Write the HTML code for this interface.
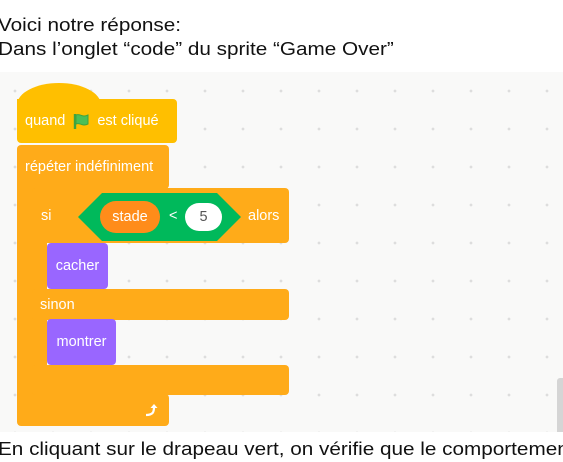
<!DOCTYPE html>
<html><head><meta charset="utf-8"><style>
*{margin:0;padding:0;box-sizing:border-box}
body{width:563px;height:462px;background:#fff;position:relative;overflow:hidden;font-family:"Liberation Sans",Arial,sans-serif}
.t{position:absolute;left:-2px;font-size:18px;color:#111;white-space:nowrap;transform:scaleX(1.15);transform-origin:0 0}
#cv{position:absolute;left:0;top:72px;width:563px;height:360px;background-color:#f9f9f8;
background-image:radial-gradient(circle,#ddd 1.2px,transparent 1.6px);background-size:38px 38px;background-position:-4px 0px}
.b{position:absolute;color:#fff;font-size:14.5px;display:flex;align-items:center;white-space:nowrap}
.o{background:#ffab19;border-radius:4px}
.p{background:#9966ff;border-radius:4px;justify-content:center}
</style></head><body>
<div class="t" style="top:15px">Voici notre réponse:</div>
<div class="t" style="top:39px">Dans l’onglet “code” du sprite “Game Over”</div>
<div id="cv"></div>
<div style="position:absolute;left:557px;top:378px;width:6px;height:54px;background:#d5d5d5;border-radius:3px 0 0 0"></div>
<!-- repeat -->
<div class="b o" style="left:17px;top:145px;width:152px;height:44px;padding-left:8px">répéter indéfiniment</div>
<div class="b o" style="left:17px;top:180px;width:18px;height:230px;border-radius:0"></div>
<div class="b o" style="left:17px;top:394px;width:152px;height:32px"></div>
<svg style="position:absolute;left:143px;top:402px" width="16" height="16" viewBox="0 0 16 16"><path d="M3 13 C10 13 11 10 11 5" stroke="#fff" stroke-width="2.2" fill="none"/><path d="M7.5 6 L11 2 L14.5 6Z" fill="#fff"/></svg>
<!-- hat -->
<div style="position:absolute;left:17px;top:83px;width:84px;height:40px;background:#ffbf00;border-radius:42px 42px 0 0/22px 22px 0 0"></div>
<div class="b" style="left:17px;top:99px;width:160px;height:44px;background:#ffbf00;border-radius:0 4px 4px 4px;padding-left:8px">quand
<svg style="margin:0 7px" width="18" height="18" viewBox="0 0 18 18"><path d="M3 2 V17" stroke="#3fa33f" stroke-width="2.4"/><path d="M4 3 C8 1 10 6 16 3 V12 C10 15 8 10 4 12Z" fill="#4cbf56" stroke="#3fa33f" stroke-width="1"/></svg>est cliqué</div>
<!-- if -->
<div class="b o" style="left:32px;top:188px;width:257px;height:55px;padding-left:9px">si</div>
<div class="b o" style="left:32px;top:230px;width:15px;height:165px;border-radius:0"></div>
<div class="b o" style="left:32px;top:289px;width:257px;height:31px;padding-left:8px">sinon</div>
<div class="b o" style="left:32px;top:365px;width:257px;height:30px"></div>
<svg style="position:absolute;left:78px;top:193px" width="163" height="48"><polygon points="0,24 24,0 139,0 163,24 139,48 24,48" fill="#00b95b"/></svg>
<div class="b" style="left:100px;top:201px;width:60px;height:32px;background:#ff8c1a;border-radius:16px;justify-content:center">stade</div>
<div class="b" style="left:169px;top:208px">&lt;</div>
<div class="b" style="left:185px;top:203px;width:37px;height:28px;background:#fff;border-radius:14px;justify-content:center;color:#555">5</div>
<div class="b" style="left:248px;top:208px">alors</div>
<div class="b p" style="left:47px;top:243px;width:61px;height:46px">cacher</div>
<div class="b p" style="left:47px;top:319px;width:69px;height:46px">montrer</div>
<div class="t" style="top:439px">En cliquant sur le drapeau vert, on vérifie que le comportement</div>
</body></html>
